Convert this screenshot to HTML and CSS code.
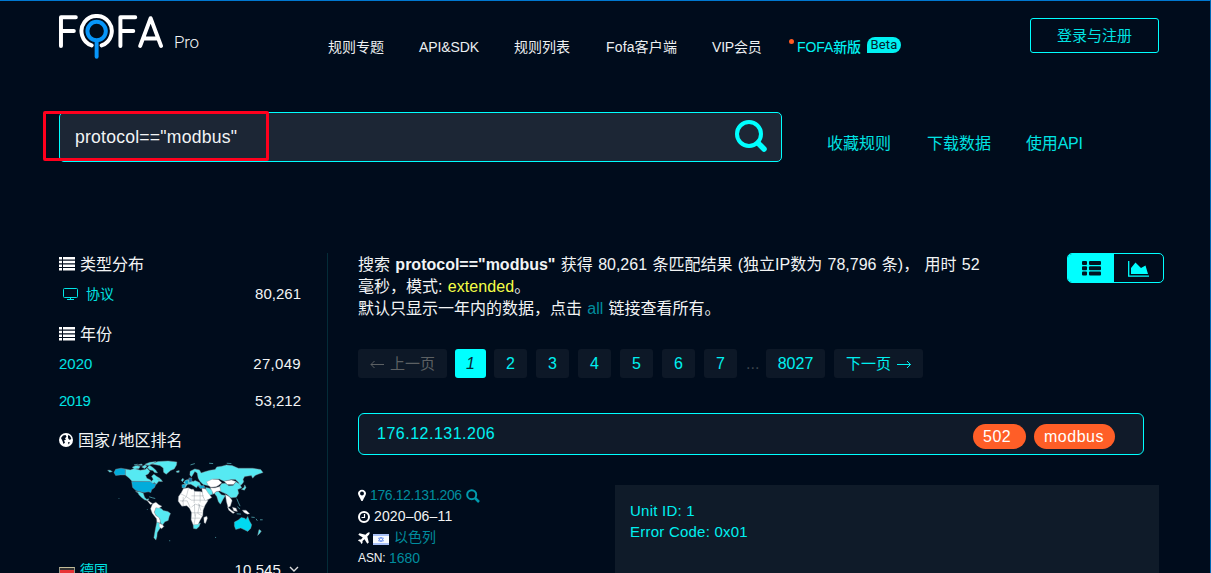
FILE: index.html
```html
<!DOCTYPE html>
<html lang="zh-CN">
<head>
<meta charset="utf-8">
<title>FOFA Pro</title>
<link rel="stylesheet" href="styles.css">
</head>
<body>
<div class="page">
  <header class="header">
    <div class="brand">
      <svg class="logo" viewBox="0 0 106 46" fill="none" stroke="#fff" stroke-width="4" stroke-linecap="round" stroke-linejoin="round">
        <path d="M18 3H3V32M3 17H16M78 3H63V32M63 17H76M83 32L93.500 4L104 32M88 24.500H99"/>
        <path d="M34 31.500A15.300 15.300 0 1 1 44 31.500"/>
        <g stroke="#0796fa"><circle cx="39" cy="17" r="9.300"/><path d="M39 27V43"/></g>
      </svg>
      <span class="brand-pro">Pro</span>
    </div>
    <nav class="nav">
      <a>规则专题</a><a class="n-api">API&amp;SDK</a><a>规则列表</a><a class="n-client">Fofa客户端</a><a class="n-vip">VIP会员</a>
      <a class="nav-new"><i class="dot"></i>FOFA新版</a><span class="beta">Beta</span>
    </nav>
    <a class="login">登录与注册</a>
  </header>

  <div class="search-row">
    <div class="search">
      <span class="query">protocol=="modbus"</span>
      <svg class="search-icon" viewBox="0 0 34 34" fill="none" stroke="#0ff"><circle cx="15" cy="15" r="12" stroke-width="4"/><path d="M24 24L30 30" stroke-width="5.500" stroke-linecap="round"/></svg>
      <div class="highlight"></div>
    </div>
    <div class="actions"><a>收藏规则</a><a>下载数据</a><a class="api">使用API</a></div>
  </div>

  <div class="content">
    <aside class="sidebar">
      <h3 class="side-title"><svg class="list-icon" viewBox="0 0 16 14" fill="#fff"><path d="M0 0H3V2.500H0ZM4 0H16V2.500H4ZM0 3.700H3V6.200H0ZM4 3.700H16V6.200H4ZM0 7.400H3V9.900H0ZM4 7.400H16V9.900H4ZM0 11H3V13.500H0ZM4 11H16V13.500H4Z"/></svg><span class="label">类型分布</span></h3>
      <div class="side-row first"><a class="proto"><svg class="screen-icon" viewBox="0 0 16 14" fill="none" stroke="#00e6e6"><rect x=".5" y="1.500" width="14" height="9" rx="1"/><path d="M7.500 10.500V13M4 12.500H11"/></svg>协议</a><span class="num">80,261</span></div>
      <h3 class="side-title year"><svg class="list-icon" viewBox="0 0 16 14" fill="#fff"><path d="M0 0H3V2.500H0ZM4 0H16V2.500H4ZM0 3.700H3V6.200H0ZM4 3.700H16V6.200H4ZM0 7.400H3V9.900H0ZM4 7.400H16V9.900H4ZM0 11H3V13.500H0ZM4 11H16V13.500H4Z"/></svg><span class="label">年份</span></h3>
      <div class="side-row first"><a>2020</a><span class="num n27">27,049</span></div>
      <div class="side-row second"><a class="y19">2019</a><span class="num">53,212</span></div>
      <h3 class="side-title country"><svg class="globe" viewBox="0 0 14 14"><circle cx="7" cy="7" r="7" fill="#fff"/><path d="M2 5L4 2.500L6.500 2L7.500 3.500L6 5.500L7 6.500L5 7.500L6 9.500L4.500 11L3.500 8ZM9 2L11 3L12.300 5.500L11 7L9.500 6L9 4.500ZM9 9L11 9.500L9.500 11.500Z" fill="#000c1c"/></svg><span class="label">国家<i class="slash">/</i>地区排名</span></h3>
      <svg class="map" viewBox="200 120 475 245" stroke="#8b969c" stroke-width="1.200" stroke-linejoin="round">
        <g fill="#56e9f2">
          <path d="M202 150L209 150L216 154L208 156Z"/>
          <path d="M255 146L270 149L282 145L300 150L315 148L320 143L329 153L324 161L316 165L320 174L331 179L333 184L339 177L334 168L341 162L350 169L359 174L362 181L354 185L349 192L342 187L334 194L329 184L275 183L267 174L255 164Z"/>
          <path d="M276 141L287 136L300 139L296 145L283 146ZM304 140L314 134L320 139L313 145ZM321 142L328 135L338 142L347 150L352 158L343 157L338 151L329 149ZM314 132L329 126L348 124L339 130L324 136ZM290 135L304 131L307 135ZM352 177L362 177L367 184L359 184Z"/>
          <path d="M334 131L353 124L384 122L410 125L409 134L402 146L391 151L378 162L370 156L369 143L359 136Z"/>
          <path d="M408 153L417 151L417 156L410 157Z"/>
          <path d="M286 214L298 215L309 219L313 231L319 237L326 236L323 242L313 239L304 232L296 224L293 218Z"/>
          <path d="M346 263L354 261L364 266L369 271L383 274L391 280L387 289L384 301L374 305L367 315L360 307L359 296L348 287L342 278Z"/>
          <path d="M350 305L360 309L365 317L357 328L351 338L350 350L347 360L341 353L345 329Z"/>
          <path d="M450 153L464 146L478 149L483 158L496 154L510 150L525 148L530 140L545 138L559 134L576 136L595 144L617 144L638 144L662 148L669 157L654 162L645 166L638 174L634 166L614 169L609 177L611 185L605 193L598 196L595 186L586 178L574 178L552 183L537 176L519 177L502 187L506 197L489 193L480 184L474 174L471 158L464 154L454 170L449 164Z"/>
          <path d="M545 190L556 189L566 197L579 196L588 185L600 193L605 203L593 208L596 219L589 231L573 233L560 222L540 213L539 198Z"/>
          <path d="M528 214L535 214L544 224L556 226L549 237L541 252L535 245L530 229L523 220Z"/>
          <path d="M497 202L508 204L517 211L518 222L507 225L497 217Z"/>
          <path d="M459 312L474 311L481 309L477 319L469 327L460 325Z"/>
          <path d="M560 232L567 233L576 244L570 247L564 242ZM657 328L664 333L659 340L653 346ZM604 207L612 202L614 194L618 202L613 210ZM430 187L438 179L445 178L459 184L465 181L478 187L484 198L473 197L469 203L460 197L452 192L442 192L435 203L426 202L428 193L436 193ZM423 180L428 174L431 178L427 185Z"/>
        </g>
        <g fill="#02acdb">
          <path d="M226 147L242 144L255 146V164L240 164L226 166L221 157Z"/>
          <path d="M274 184L330 184L339 190L348 190L343 202L334 209L332 217L324 215L311 217L301 215L287 211L277 202Z"/>
          <path d="M425 194L436 193L434 203L426 203ZM434 181L444 180L444 192L435 191ZM474 197L491 196L495 202L480 205Z"/>
        </g>
        <path fill="#0f71aa" d="M446 173L455 173L455 185L447 186Z"/>
        <path fill="#00d9f1" d="M583 306L596 299L603 292L614 294L618 298L623 289L628 302L635 314L632 325L623 334L613 329L602 324L587 328L583 318Z"/>
        <g fill="#fff">
          <path d="M430 205L445 203L453 207L460 207L463 213L480 214L488 216L491 231L497 239L504 241L495 255L489 270L488 286L480 300L474 313L459 314L453 299L454 277L448 264L440 257L425 258L414 243L415 229L423 218Z"/>
          <path d="M491 292L500 288L502 294L496 310L492 308ZM485 204L496 206L504 218L515 232L506 237L495 242L488 228Z"/>
          <path d="M337 251L347 246L356 254L365 258L356 264L347 263L342 276L347 286L357 293L360 302L359 309L350 306L349 296L336 279L331 266ZM357 310L366 313L371 319L364 326L357 320Z"/>
          <path d="M499 185L516 177L535 178L545 188L536 195L528 200L512 201L504 195ZM552 183L574 179L588 184L580 193L562 193ZM510 203L525 203L539 199L542 212L528 214L520 222L515 211Z"/>
          <path d="M556 223L568 230L576 240L571 258L564 262L559 244ZM562 260L574 270L584 277L579 280L566 270ZM577 261L588 264L592 274L581 272ZM607 270L618 270L629 281L622 282L612 277ZM319 239L329 245L337 251L330 253Z"/>
        </g>
        <path fill="none" d="M420 220L436 228L454 240H494M445 204L439 228L425 246M463 213L462 249M480 214V247M454 227H491M419 242H441L450 262M454 261L465 252L491 260M463 252L464 289M478 252L473 280L487 288M454 278H487M454 294H480M467 280L462 312M475 250L482 271M429 230V258"/>
        <path fill="none" stroke="#62c6ce" stroke-width="2" d="M281 134L292 132M312 137L325 132M451 134L464 130M507 129L519 130M560 129L574 130M327 230L337 233L345 235M590 235L595 247L600 258M592 260L600 267M590 281L603 282M634 291L644 292M320 268H322M525 352H528M235 235H237M387 362H390M648 296L652 302M660 299H668"/>
      </svg>
      <div class="side-row germany"><a><i class="de-flag"></i>德国</a><span class="de-num">10,545</span><svg class="chevron" viewBox="0 0 10 7" fill="none" stroke="#ddd" stroke-width="1.400"><path d="M1 1L5 5L9 1"/></svg></div>
    </aside>

    <main class="main">
      <div class="summary">
        <p class="summary-text"><span class="line1">搜索 <b>protocol=="modbus"</b> 获得 80,261 条匹配结果 (独立IP数为 78,796 条)， 用时 52</span><br>毫秒，模式: <span class="yellow">extended</span>。<br>默认只显示一年内的数据，点击 <a class="teal">all</a> 链接查看所有。</p>
        <div class="toggle">
          <span class="toggle-list"><svg viewBox="0 0 19 15" fill="#001421"><rect width="5" height="4" rx="1"/><rect x="7" width="12" height="4" rx="1"/><rect y="5.300" width="5" height="4" rx="1"/><rect x="7" y="5.300" width="12" height="4" rx="1"/><rect y="10.600" width="5" height="4" rx="1"/><rect x="7" y="10.600" width="12" height="4" rx="1"/></svg></span>
          <span class="toggle-chart"><svg viewBox="0 0 21 16"><path d="M.7 0V15.200H21" fill="none" stroke="#0ff" stroke-width="1.300"/><path d="M3 13V7L7.500 1.500L13 7L17.500 4.500L20 13Z" fill="#0ff"/></svg></span>
        </div>
      </div>
      <div class="pager">
        <span class="pg prev"><svg class="arrow" viewBox="0 0 14 8" fill="none" stroke="#5c6063"><path d="M14 4.500H1M4.500 1L1 4.500L4.500 8"/></svg>上一页</span><em class="pg current">1</em><a class="pg">2</a><a class="pg">3</a><a class="pg">4</a><a class="pg">5</a><a class="pg">6</a><a class="pg">7</a><span class="gap">...</span><a class="pg last">8027</a><a class="pg next">下一页<svg class="arrow" viewBox="0 0 14 8" fill="none" stroke="#00f0f0"><path d="M0 4.500H13.500M10 1L13.500 4.500L10 8"/></svg></a>
      </div>
      <div class="result-head"><a class="result-ip">176.12.131.206</a><div class="tags"><span class="tag port">502</span><span class="tag proto-tag">modbus</span></div></div>
      <div class="result-body">
        <ul class="meta">
          <li><svg class="pin" viewBox="0 0 9 13"><path fill="#fff" fill-rule="evenodd" d="M4.500 0C7 0 9 2 9 4.300C9 6 7 9 5.500 12C5 13 4 13 3.500 12C2 9 0 6 0 4.300C0 2 2 0 4.500 0ZM4.500 2A2.200 2.200 0 1 0 4.500 6.400A2.200 2.200 0 1 0 4.500 2Z"/></svg><a class="teal meta-ip">176.12.131.206</a><svg class="mag" viewBox="0 0 14 14" fill="none" stroke="#009bae" stroke-width="2"><circle cx="5.700" cy="5.700" r="4.500"/><path d="M9 9L13 13" stroke-width="2.500"/></svg></li>
          <li><svg class="clock" viewBox="0 0 12 12" fill="none" stroke="#fff"><circle cx="6" cy="6" r="5" stroke-width="2"/><path d="M6.500 3V6.500H3.500" stroke-width="1.200"/></svg><span class="date">2020–06–11</span></li>
          <li><svg class="plane" viewBox="0 0 12 12" fill="#fff"><path d="M11.500 .5C12 1.200 11 3 9.300 4.500L10.800 10.500L9.300 11.700L6.500 7.200L4.500 9V11L3.300 12L2.300 9.700L0 8.700L1 7.500L3 7.500L4.800 5.500L.3 2.700L1.500 1.200L7.500 2.700C9 1.200 10.800 -.2 11.500 .5Z"/></svg><svg class="il-flag" viewBox="0 0 16 11"><path fill="#f7faff" d="M0 0H16V11H0Z"/><path fill="#5b86ed" d="M0 .5H16V1.500H0ZM0 9.500H16V10.500H0Z"/><path fill="none" stroke="#668cec" stroke-width=".8" d="M8 3L10.500 7H5.500ZM8 8L5.500 4H10.500Z"/></svg><a class="teal">以色列</a></li>
          <li><span class="asn">ASN:</span><a class="teal asn-num">1680</a></li>
        </ul>
        <div class="banner"><p>Unit ID: 1</p><p>Error Code: 0x01</p></div>
      </div>
    </main>
  </div>
</div>
</body>
</html>
```
FILE: styles.css
```css
* { box-sizing: border-box; }
body { margin: 0; background: #000c1c; color: #f2f4f5; font-family: "Liberation Sans", "Noto Sans CJK SC", sans-serif; font-size: 16px; }
p, h3, ul { margin: 0; padding: 0; font-weight: 400; }
svg { display: block; flex: none; }
a { color: #00e3e3; text-decoration: none; white-space: nowrap; }
.page { width: 1211px; height: 573px; overflow: hidden; border-top: 1px solid #0078d0; border-right: 1px solid #0067b4; }
.header { display: flex; height: 111px; padding-left: 58px; }
.brand { display: flex; width: 270px; padding-top: 13px; }
.logo { width: 105px; height: 46px; }
.brand-pro { margin: 16px 0 0 11px; font: 300 17px/24px Roboto, sans-serif; letter-spacing: -.3px; }
.nav { display: flex; gap: 35px; width: 702px; padding-top: 35px; font-size: 14px; line-height: 22px; white-space: nowrap; }
.nav a { color: #eceff1; }
.nav .n-api { width: 60px; letter-spacing: -.1px; }
.nav .n-client { width: 72px; padding-left: 1px; letter-spacing: .15px; }
.nav .n-vip { width: 50px; letter-spacing: -.2px; }
.nav .nav-new { position: relative; width: 65px; color: #00f2f2; font-weight: 500; letter-spacing: -.1px; }
.dot { position: absolute; left: -8px; top: 3px; width: 5px; height: 5px; border-radius: 50%; background: #ff5a22; }
.beta { width: 34px; height: 16px; margin: 1px 0 0 -30px; border-radius: 8px 8px 8px 0; background: #00f2f2; color: #04202c; font: 13px/16px Roboto, sans-serif; letter-spacing: .2px; text-align: center; }
.login { width: 129px; height: 35px; margin-top: 17px; border: 1px solid #0ff; border-radius: 3px; font-size: 15px; line-height: 33px; text-align: center; }
.search-row { display: flex; height: 50px; padding-left: 59px; }
.search { position: relative; display: flex; justify-content: space-between; width: 723px; height: 50px; padding: 0 13px 0 15px; border: 1px solid #0ff; border-radius: 5px; background: #1c2635; }
.query { font-size: 17.600px; line-height: 48px; letter-spacing: .22px; }
.search-icon { width: 34px; height: 34px; margin-top: 6px; }
.highlight { position: absolute; left: -17px; top: -2px; width: 226px; height: 50px; border: 3px solid #ff001d; border-radius: 2px; }
.actions { display: flex; gap: 36px; margin: 21px 0 0 45px; line-height: 22px; }
.api { margin-left: -1px; letter-spacing: -.2px; }
.content { display: flex; margin-top: 91px; padding-left: 59px; }
.sidebar { width: 269px; height: 320px; flex: none; padding-right: 26px; border-right: 1px solid #042c38; }
.side-title { display: flex; align-items: center; height: 22px; font-size: 16px; line-height: 22px; }
.label { padding-top: 2px; }
.slash { padding: 0 2px; font-style: normal; }
.list-icon { width: 16px; height: 14px; margin-right: 5px; }
.side-row { display: flex; align-items: center; justify-content: space-between; height: 30px; font-size: 15px; }
.side-row.first { margin-top: 3px; }
.side-row.second { margin-top: 7px; }
.side-row a { display: flex; align-items: center; }
.side-row .proto { font-size: 14px; }
.n27 { letter-spacing: .3px; }
.screen-icon { width: 16px; height: 14px; margin: 1px 7px 0 4px; }
.year { margin-top: 15px; }
.y19 { letter-spacing: -.5px; }
.country { margin-top: 14px; }
.globe { width: 14px; height: 14px; margin-right: 5px; }
.map { width: 158px; height: 82px; margin: 9px 0 0 48px; }
.germany { margin-top: 12px; }
.side-row .de-flag { width: 16px; height: 11px; margin: 6px 5px 0 0; border: 1px solid #999784; border-top-color: #c3bd99; background: linear-gradient(#333 0 20%, #e83335 20% 75%, #e6b32c 75%); }
.germany a { width: 175px; font-size: 14px; }
.de-num { width: 54px; letter-spacing: .1px; }
.chevron { width: 10px; height: 7px; margin-right: 2px; }
.main { flex: none; width: 836px; padding-left: 30px; }
.summary { display: flex; justify-content: space-between; height: 96px; padding-right: 0; }
.summary-text { padding-top: 1px; white-space: nowrap; line-height: 22px; word-spacing: .8px; }
.line1 { word-spacing: .9px; }
.yellow { color: #f5ff46; letter-spacing: .1px; }
.teal { color: #008c9e; }
.toggle { display: flex; width: 97px; height: 30px; border: 1px solid #0ff; border-radius: 5px; overflow: hidden; }
.toggle-list { width: 46px; background: #0ff; padding: 7px 0 0 14px; }
.toggle-list svg { width: 19px; height: 15px; }
.toggle-chart { padding: 7px 0 0 14px; }
.toggle-chart svg { width: 21px; height: 16px; }
.pager { display: flex; height: 29px; white-space: nowrap; }
.pg { width: 33px; margin-right: 9px; border-radius: 3px; background: #0d1827; color: #00f0f0; font-size: 16px; line-height: 29px; text-align: center; }
.prev, .next { display: flex; align-items: center; justify-content: center; gap: 6px; width: 89px; font-size: 15px; }
.prev { margin-right: 8px; color: #5c6063; }
.arrow { width: 14px; height: 8px; }
.current { width: 31px; margin-right: 8px; background: #0ff; color: #052936; }
.gap { width: 20px; color: #3c454d; line-height: 29px; }
.last { width: 59px; }
.result-head { display: flex; justify-content: space-between; width: 786px; height: 42px; margin-top: 35px; padding: 0 28px 0 18px; border: 1px solid #0ff; border-radius: 6px; background: #101a29; }
.result-ip { line-height: 39px; letter-spacing: .5px; color: #00f2f2; }
.tags { display: flex; gap: 8px; padding-top: 10px; }
.tag { height: 25px; border-radius: 13px; background: #ff5e27; color: #fff; line-height: 25px; }
.port { width: 53px; padding-left: 10px; letter-spacing: .5px; }
.proto-tag { width: 81px; padding-left: 10px; letter-spacing: .5px; }
.result-body { display: flex; margin-top: 30px; }
.meta { flex: none; width: 257px; list-style: none; font-size: 14px; line-height: 21px; }
.meta li { display: flex; align-items: center; height: 21px; }
.pin { width: 8px; height: 13px; margin-right: 4px; }
.meta-ip { width: 91px; letter-spacing: -.4px; }
.mag { width: 14px; height: 14px; margin-left: 5px; }
.clock { width: 12px; height: 12px; margin-right: 4px; }
.date { letter-spacing: .15px; }
.plane { width: 12px; height: 12px; margin-right: 3px; }
.il-flag { width: 16px; height: 11px; margin: 3px 5px 0 0; }
.asn { width: 31px; font-size: 12px; letter-spacing: -.1px; }
.banner { width: 544px; height: 100px; flex: none; padding: 15px; background: #0f1b29; color: #00f0f0; font-size: 15px; line-height: 21px; letter-spacing: .23px; }
```
